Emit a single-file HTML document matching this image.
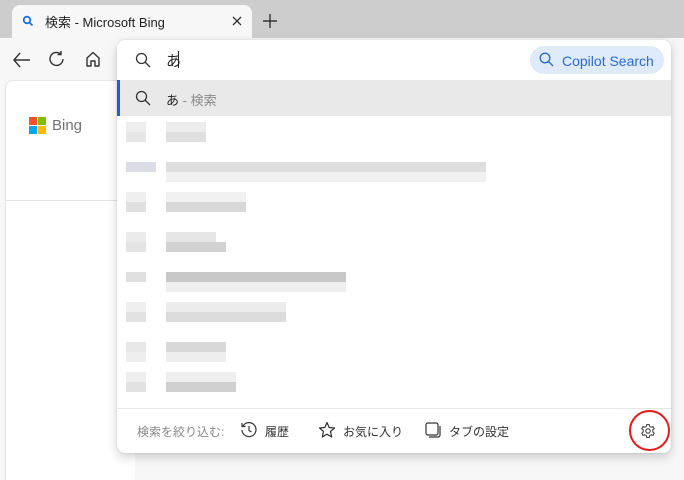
<!DOCTYPE html>
<html><head><meta charset="utf-8"><style>
*{margin:0;padding:0;box-sizing:border-box}
body{width:684px;height:466px;overflow:hidden;background:#f7f7f7;font-family:"Liberation Sans","Noto Sans CJK JP",sans-serif;position:relative}
.abs{position:absolute}
.b{position:absolute;height:10px}
</style></head><body>
<div class="abs" style="left:0;top:0;width:684px;height:38px;background:#cdcdcd"></div>
<div class="abs" style="left:12px;top:5px;width:240px;height:36px;background:#f7f7f7;border-radius:8px 8px 0 0"></div>
<svg class="abs" style="left:22px;top:15px" width="12" height="12" viewBox="0 0 12 12"><circle cx="5" cy="5" r="3.3" fill="none" stroke="#1a73d9" stroke-width="1.8"/><path d="M7.5 7.5L10.5 10.5" stroke="#1a73d9" stroke-width="1.8"/></svg>
<div class="abs" style="left:45px;top:12px;font-size:13px;color:#222">検索 - Microsoft Bing</div>
<svg class="abs" style="left:232px;top:16px" width="10" height="10"><path d="M1 1L9 9M9 1L1 9" stroke="#333" stroke-width="1.3"/></svg>
<svg class="abs" style="left:262px;top:13px" width="16" height="16"><path d="M8 1V15M1 8H15" stroke="#333" stroke-width="1.4"/></svg>
<svg class="abs" style="left:12px;top:51px" width="20" height="18" viewBox="0 0 20 18"><path d="M18 9H2M8 2L2 9L8 16" fill="none" stroke="#333" stroke-width="1.4"/></svg>
<svg class="abs" style="left:48px;top:50px" width="18" height="18" viewBox="0 0 18 18"><path d="M15 9A6.5 6.5 0 1 1 12.5 3.8M13 1V4.5H9.5" fill="none" stroke="#333" stroke-width="1.4"/></svg>
<svg class="abs" style="left:84px;top:50px" width="18" height="18" viewBox="0 0 18 18"><path d="M3 8L9 2.5L15 8V16H11V11H7V16H3Z" fill="none" stroke="#333" stroke-width="1.4" stroke-linejoin="round"/></svg>
<div class="abs" style="left:5px;top:80px;width:130px;height:400px;background:#fff;border-radius:8px 0 0 0;border-left:1px solid #e2e2e2;border-top:1px solid #e8e8e8"></div>
<div class="abs" style="left:5px;top:200px;width:120px;height:1px;background:#e2e2e2"></div>
<div class="abs" style="left:29px;top:117px;width:8px;height:8px;background:#f35325"></div>
<div class="abs" style="left:38px;top:117px;width:8px;height:8px;background:#81bc06"></div>
<div class="abs" style="left:29px;top:126px;width:8px;height:8px;background:#05a6f0"></div>
<div class="abs" style="left:38px;top:126px;width:8px;height:8px;background:#ffba08"></div>
<div class="abs" style="left:52px;top:117px;font-size:15px;color:#737373">Bing</div>

<div class="abs" style="left:117px;top:40px;width:554px;height:413px;background:#fff;border-radius:8px;box-shadow:0 4px 10px rgba(0,0,0,.18),0 0 2px rgba(0,0,0,.12);overflow:hidden">
 <svg class="abs" style="left:18px;top:12px" width="16" height="16" viewBox="0 0 16 16"><circle cx="6.5" cy="6.5" r="5" fill="none" stroke="#333" stroke-width="1.3"/><path d="M10 10L15 15" stroke="#333" stroke-width="1.3"/></svg>
 <div class="abs" style="left:49px;top:10px;font-size:15px;color:#222">あ</div>
 <div class="abs" style="left:61px;top:11px;width:1px;height:17px;background:#222"></div>
 <div class="abs" style="left:413px;top:6px;width:134px;height:28px;border-radius:14px;background:#dfeafb"></div>
 <svg class="abs" style="left:422px;top:12px" width="15" height="15" viewBox="0 0 15 15"><circle cx="6" cy="6" r="4.8" fill="none" stroke="#2b6ad8" stroke-width="1.3"/><path d="M9.5 9.5L14 14" stroke="#2b6ad8" stroke-width="1.3"/></svg>
 <div class="abs" style="left:445px;top:13px;font-size:14px;color:#2b6ad8">Copilot Search</div>
 <div class="abs" style="left:0;top:40px;width:554px;height:36px;background:#e9e9e9"></div>
 <div class="abs" style="left:0;top:40px;width:3px;height:36px;background:#1f5fd6"></div>
 <svg class="abs" style="left:18px;top:50px" width="16" height="16" viewBox="0 0 16 16"><circle cx="6.5" cy="6.5" r="5" fill="none" stroke="#333" stroke-width="1.3"/><path d="M10 10L15 15" stroke="#333" stroke-width="1.3"/></svg>
 <div class="abs" style="left:49px;top:50px;font-size:13px;color:#222">あ <span style="color:#8a8a8a">- 検索</span></div>
 <div class="abs" style="left:0;top:368px;width:554px;height:1px;background:#e6e6e6"></div>
 <div class="abs" style="left:20px;top:383px;font-size:12px;color:#888">検索を絞り込む:</div>
 <svg class="abs" style="left:123px;top:381px" width="18" height="18" viewBox="0 0 18 18"><path d="M3 5A7 7 0 1 1 2 9M2 2V5.5H5.5M9 5V9.5L11.5 11" fill="none" stroke="#333" stroke-width="1.2"/></svg>
 <div class="abs" style="left:148px;top:383px;font-size:12px;color:#333">履歴</div>
 <svg class="abs" style="left:201px;top:381px" width="18" height="18" viewBox="0 0 18 18"><path d="M9 1.5L11.2 6.5L16.5 7L12.5 10.5L13.7 16L9 13.2L4.3 16L5.5 10.5L1.5 7L6.8 6.5Z" fill="none" stroke="#333" stroke-width="1.2" stroke-linejoin="round"/></svg>
 <div class="abs" style="left:226px;top:383px;font-size:12px;color:#333">お気に入り</div>
 <svg class="abs" style="left:307px;top:381px" width="18" height="18" viewBox="0 0 18 18"><rect x="2" y="2" width="12" height="12" rx="2" fill="none" stroke="#333" stroke-width="1.2"/><path d="M16 5V14A2 2 0 0 1 14 16H5" fill="none" stroke="#333" stroke-width="1.2"/></svg>
 <div class="abs" style="left:332px;top:383px;font-size:12px;color:#333">タブの設定</div>
 <svg class="abs" style="left:523px;top:383px" width="16" height="16" viewBox="0 0 16 16"><circle cx="8" cy="8" r="2.2" fill="none" stroke="#444" stroke-width="1.1"/><path d="M6.8 1.5H9.2L9.6 3.3L11.2 4.2L13 3.6L14.2 5.7L12.8 7V9L14.2 10.3L13 12.4L11.2 11.8L9.6 12.7L9.2 14.5H6.8L6.4 12.7L4.8 11.8L3 12.4L1.8 10.3L3.2 9V7L1.8 5.7L3 3.6L4.8 4.2L6.4 3.3Z" fill="none" stroke="#444" stroke-width="1.1" stroke-linejoin="round"/></svg>
</div>
<div class="abs" style="left:629px;top:410px;width:41px;height:41px;border:2px solid #e51a1a;border-radius:50%"></div>

<!-- blurred rows -->
<div class="b" style="left:126px;top:122px;width:20px;background:#eee"></div><div class="b" style="left:126px;top:132px;width:20px;background:#e6e6e6"></div>
<div class="b" style="left:166px;top:122px;width:40px;background:#ececec"></div><div class="b" style="left:166px;top:132px;width:40px;background:#e0e0e0"></div>
<div class="b" style="left:126px;top:162px;width:30px;background:#dcdce6"></div><div class="b" style="left:166px;top:162px;width:320px;background:#dedede"></div><div class="b" style="left:166px;top:172px;width:320px;background:#f1f1f1"></div>
<div class="b" style="left:126px;top:192px;width:20px;background:#efefef"></div><div class="b" style="left:126px;top:202px;width:20px;background:#e0e0e0"></div>
<div class="b" style="left:166px;top:192px;width:80px;background:#f1f1f1"></div><div class="b" style="left:166px;top:202px;width:80px;background:#d8d8d8"></div>
<div class="b" style="left:126px;top:232px;width:20px;background:#ebebeb"></div><div class="b" style="left:126px;top:242px;width:20px;background:#e4e4e4"></div>
<div class="b" style="left:166px;top:232px;width:50px;background:#e6e6e6"></div><div class="b" style="left:166px;top:242px;width:60px;background:#d2d2d2"></div>
<div class="b" style="left:126px;top:272px;width:20px;background:#e0e0e0"></div><div class="b" style="left:166px;top:272px;width:180px;background:#c8c8c8"></div><div class="b" style="left:166px;top:282px;width:180px;background:#efefef"></div>
<div class="b" style="left:126px;top:302px;width:20px;background:#efefef"></div><div class="b" style="left:126px;top:312px;width:20px;background:#e2e2e2"></div>
<div class="b" style="left:166px;top:302px;width:120px;background:#ececec"></div><div class="b" style="left:166px;top:312px;width:120px;background:#dcdcdc"></div>
<div class="b" style="left:126px;top:342px;width:20px;background:#e8e8e8"></div><div class="b" style="left:126px;top:352px;width:20px;background:#eee"></div>
<div class="b" style="left:166px;top:342px;width:60px;background:#d8d8d8"></div><div class="b" style="left:166px;top:352px;width:60px;background:#eee"></div>
<div class="b" style="left:126px;top:372px;width:20px;background:#efefef"></div><div class="b" style="left:126px;top:382px;width:20px;background:#e2e2e2"></div>
<div class="b" style="left:166px;top:372px;width:70px;background:#efefef"></div><div class="b" style="left:166px;top:382px;width:70px;background:#d0d0d0"></div>
</body></html>
